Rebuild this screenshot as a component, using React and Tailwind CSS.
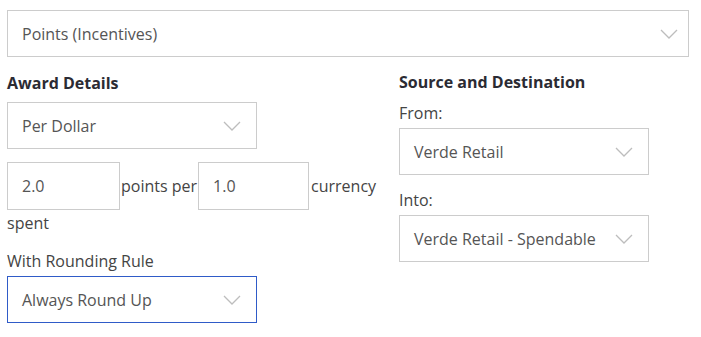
import React from 'react';

function Chevron() {
  return (
    <svg width="18" height="10" viewBox="0 0 18 10" className="shrink-0">
      <path d="M1 1 L9 9 L17 1" fill="none" stroke="#bdbdbd" strokeWidth="1.3" />
    </svg>
  );
}

function Select({ value, className = '', focused = false }) {
  return (
    <div
      className={`h-[47px] flex items-center justify-between pl-[14px] bg-white border ${
        focused ? 'border-[#2f5bc8]' : 'border-[#cccccc]'
      } ${className}`}
    >
      <span className="text-[16px] text-[#555]">{value}</span>
      <Chevron />
    </div>
  );
}

export default function App() {
  return (
    <div className="w-[701px] h-[337px] bg-white pt-[10px] px-[7px] font-['Open_Sans',sans-serif] text-[#333]">
      <Select value="Points (Incentives)" className="w-[682px] pr-[10px]" />

      <div className="flex mt-[14px]">
        {/* Award details */}
        <div className="w-[392px]">
          <h3 className="text-[16px] font-bold leading-[24px] text-[#2b2b33]">Award Details</h3>
          <Select value="Per Dollar" className="w-[250px] mt-[7px] pr-[15px]" />
          <div className="mt-[13px] w-[384px] text-[16px] leading-[25px] text-[#444]">
            <input
              readOnly
              value="2.0"
              className="w-[113px] h-[48px] border border-[#cccccc] px-[14px] text-[#555] align-middle outline-none"
            />
            <span className="align-middle pl-[1px]">points per</span>
            <input
              readOnly
              value="1.0"
              className="w-[111px] h-[48px] border border-[#cccccc] px-[14px] text-[#555] align-middle outline-none ml-[1px]"
            />
            <span className="align-middle pl-[2px]">currency spent</span>
          </div>
          <p className="mt-[14px] text-[16px] leading-[22px] text-[#444]">With Rounding Rule</p>
          <Select value="Always Round Up" focused className="w-[250px] mt-[4px] pr-[15px]" />
        </div>

        {/* Source and destination */}
        <div className="-mt-[1px]">
          <h3 className="text-[16px] font-bold leading-[24px] text-[#2b2b33]">Source and Destination</h3>
          <p className="mt-[8px] text-[16px] leading-[22px] text-[#444]">From:</p>
          <Select value="Verde Retail" className="w-[250px] mt-[4px] pr-[15px]" />
          <p className="mt-[14px] text-[16px] leading-[22px] text-[#444]">Into:</p>
          <Select value="Verde Retail - Spendable" className="w-[250px] mt-[4px] pr-[15px]" />
        </div>
      </div>
    </div>
  );
}
